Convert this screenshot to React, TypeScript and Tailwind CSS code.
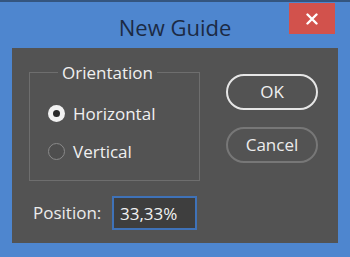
import React, { useState } from 'react';

const font = { fontFamily: '"Open Sans", "Noto Sans", "Liberation Sans", sans-serif' };

const Radio = ({ checked, label, onClick }: { checked: boolean; label: string; onClick: () => void }) => (
  <button onClick={onClick} className="flex items-center gap-[8px] text-[17px] text-[#f0f0f0] leading-none">
    {checked ? (
      <span className="w-[17px] h-[17px] rounded-full bg-[#f2f2f2] flex items-center justify-center">
        <span className="w-[7px] h-[7px] rounded-full bg-[#2a2a2a]" />
      </span>
    ) : (
      <span className="w-[17px] h-[17px] rounded-full border-[1.5px] border-[#8a8a8a] bg-[#4e4e4e]" />
    )}
    <span>{label}</span>
  </button>
);

const App = () => {
  const [orientation, setOrientation] = useState<'h' | 'v'>('h');
  const [position, setPosition] = useState('33,33%');

  return (
    <div style={font} className="w-[350px] h-[257px] bg-[#4e86cf] border-t-2 border-[#34557f] flex flex-col">
      <div className="h-[46px] relative flex items-center justify-center">
        <span className="text-[22px] text-[#1c2a44] pt-[4px]">New Guide</span>
        <button className="absolute right-[15px] top-[1px] w-[46px] h-[31px] bg-[#d2524c] flex items-center justify-center text-white">
          <svg width="12" height="12" viewBox="0 0 12 12">
            <path d="M1.5 1.5 L10.5 10.5 M10.5 1.5 L1.5 10.5" stroke="white" strokeWidth="2.4" strokeLinecap="round" />
          </svg>
        </button>
      </div>
      <div className="mx-[12px] mb-[14px] flex-1 bg-[#535353] pl-[17px] pr-[18px] pt-[16px]">
        <div className="flex">
          <fieldset className="w-[171px] h-[117px] border border-[#6e6e6e] pl-[18px] pt-[24px] m-0">
            <legend className="text-[17px] text-[#f0f0f0] ml-[10px] px-[4px] leading-none">Orientation</legend>
            <div className="flex flex-col gap-[21px]">
              <Radio checked={orientation === 'h'} label="Horizontal" onClick={() => setOrientation('h')} />
              <Radio checked={orientation === 'v'} label="Vertical" onClick={() => setOrientation('v')} />
            </div>
          </fieldset>
          <div className="ml-[26px] mt-[10px] flex flex-col gap-[17px]">
            <button className="w-[92px] h-[36px] rounded-full border-2 border-[#e6e6e6] text-[17px] text-[#f0f0f0]">OK</button>
            <button className="w-[92px] h-[36px] rounded-full border-2 border-[#777777] text-[17px] text-[#ececec]">Cancel</button>
          </div>
        </div>
        <div className="flex items-center mt-[15px] pl-[4px]">
          <span className="text-[17px] text-[#ececec] w-[79px]">Position:</span>
          <input
            value={position}
            onChange={(e) => setPosition(e.target.value)}
            className="w-[85px] h-[34px] bg-[#3e3e3e] border-2 border-[#3f72b8] text-[17px] text-[#f2f2f2] px-[6px] outline-none"
          />
        </div>
      </div>
    </div>
  );
};

export default App;
